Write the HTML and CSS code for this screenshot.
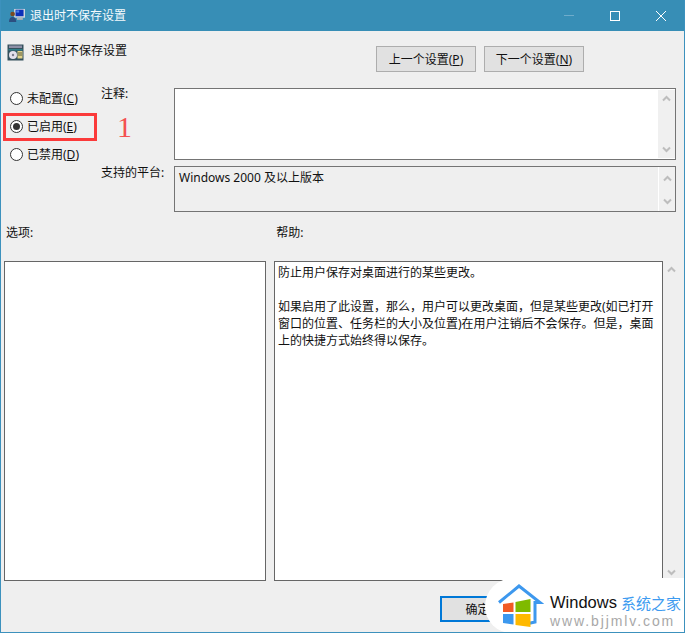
FILE: index.html
```html
<!DOCTYPE html>
<html lang="zh-CN">
<head>
<meta charset="utf-8">
<title>退出时不保存设置</title>
<link rel="stylesheet" href="styles.css">
</head>
<body>
<div class="window">
  <header class="titlebar">
    <svg class="title-icon" width="16" height="15" viewBox="0 0 22 20">
      <rect x="7" y="1" width="15" height="12" fill="#cfd6dc"/>
      <rect x="9" y="2" width="11" height="9" fill="#0b2fb8"/>
      <rect x="10" y="3" width="4" height="3" fill="#4f7fe6"/>
      <rect x="11" y="13" width="8" height="3" fill="#aab2b8"/>
      <circle cx="5" cy="8" r="3.2" fill="#7a4b22"/>
      <path d="M0 19 Q0 12 5 12 Q10 12 10 19 Z" fill="#2c4f80"/>
    </svg>
    <span class="title-text">退出时不保存设置</span>
    <div class="win-controls">
      <span class="win-btn"><svg width="12" height="12" viewBox="0 0 12 12"><path d="M1 5.5H11" stroke="#6eaccb" fill="none"/></svg></span>
      <span class="win-btn"><svg width="12" height="12" viewBox="0 0 12 12"><rect x="1.5" y="1.5" width="9" height="9" stroke="#fff" fill="none"/></svg></span>
      <span class="win-btn"><svg width="12" height="12" viewBox="0 0 12 12"><path d="M1 1L11 11M11 1L1 11" stroke="#fff" fill="none"/></svg></span>
    </div>
  </header>

  <main class="content">
    <div class="head">
      <svg class="head-icon" width="17" height="17" viewBox="0 0 17 17">
        <rect x="0.5" y="0.5" width="16" height="16" fill="#34505c"/>
        <rect x="2" y="1.5" width="13" height="2.5" fill="#8d8fa6"/>
        <rect x="1.5" y="5" width="14" height="1.5" fill="#2f7f88"/>
        <circle cx="6" cy="11" r="4" fill="#e4e0ec"/>
        <circle cx="6" cy="11" r="1.2" fill="#7b7b8c"/>
        <rect x="10.500" y="7" width="5" height="7.5" fill="#e3d48c"/>
        <path d="M11 9H15M11 11H15" stroke="#5a5a3a"/>
      </svg>
      <h1 class="head-title">退出时不保存设置</h1>
      <div class="nav-buttons">
        <button class="btn">上一个设置(<u>P</u>)</button>
        <button class="btn">下一个设置(<u>N</u>)</button>
      </div>
    </div>

    <div class="settings">
      <div class="radios">
        <label class="radio"><input type="radio" name="state">未配置(<u>C</u>)</label>
        <label class="radio"><input type="radio" name="state" checked>已启用(<u>E</u>)</label>
        <label class="radio"><input type="radio" name="state">已禁用(<u>D</u>)</label>
      </div>
      <div class="field-label comment-label">注释:</div>
      <div class="box comment-box">
        <div class="box-body"></div>
        <div class="scrollbar">
          <svg class="chev" width="9" height="7" viewBox="0 0 9 7"><path d="M1 5.5L4.5 2L8 5.5" /></svg>
          <svg class="chev" width="9" height="7" viewBox="0 0 9 7"><path d="M1 1.5L4.5 5L8 1.5" /></svg>
        </div>
      </div>
      <div class="field-label platform-label">支持的平台:</div>
      <div class="box platform-box">
        <div class="box-body platform-text">Windows 2000 及以上版本</div>
        <div class="scrollbar platform-scroll">
          <svg class="chev" width="9" height="7" viewBox="0 0 9 7"><path d="M1 5.5L4.5 2L8 5.5" /></svg>
          <svg class="chev" width="9" height="7" viewBox="0 0 9 7"><path d="M1 1.5L4.5 5L8 1.5" /></svg>
        </div>
      </div>
    </div>

    <div class="section-labels">
      <span class="options-label">选项:</span>
      <span class="help-label">帮助:</span>
    </div>

    <div class="panes">
      <div class="pane options-pane"></div>
      <div class="pane help-pane">防止用户保存对桌面进行的某些更改。<br><br>如果启用了此设置，那么，用户可以更改桌面，但是某些更改(如已打开<br>窗口的位置、任务栏的大小及位置)在用户注销后不会保存。但是，桌面<br>上的快捷方式始终得以保存。</div>
      <div class="scrollbar help-scroll">
        <svg class="chev" width="9" height="7" viewBox="0 0 9 7"><path d="M1 5.5L4.5 2L8 5.5" /></svg>
        <svg class="chev" width="9" height="7" viewBox="0 0 9 7"><path d="M1 1.5L4.5 5L8 1.5" /></svg>
      </div>
    </div>

    <div class="footer">
      <button class="btn ok-btn">确定</button>
    </div>
  </main>

  <div class="annot-rect"></div>
  <div class="annot-num">1</div>

  <div class="watermark">
    <svg class="wm-logo" width="48" height="46" viewBox="0 0 48 46">
      <path d="M3 19.5L23 3L44 19.5H39V39L30 41" fill="none" stroke="#3d98ee" stroke-width="3"/>
      <path d="M7 21L17.500 19.500V29H7Z" fill="#f15a24"/>
      <path d="M19.500 19L34.500 16V29H19.500Z" fill="#7fba00"/>
      <path d="M7 31H17.500V41.500L7 40Z" fill="#3c98ee"/>
      <path d="M19.500 31H34.500V44L19.500 42Z" fill="#ffb900"/>
    </svg>
    <div class="wm-text">
      <div class="wm-line"><span class="wm-name">Windows</span><span class="wm-cn">系统之家</span></div>
      <div class="wm-url">www.bjjmlv.com</div>
    </div>
  </div>
</div>
</body>
</html>
```
FILE: styles.css
```css
* { box-sizing: border-box; }
html, body { margin: 0; padding: 0; background: #fff; }
body {
  width: 686px;
  height: 633px;
  overflow: hidden;
  font-family: "Noto Sans", "Noto Sans CJK SC", sans-serif;
  font-size: 12px;
  color: #111;
}
.window {
  position: relative;
  width: 685px;
  height: 633px;
  background: #efefef;
  border: 1px solid #3c91bd;
  border-top: 0;
  display: flex;
  flex-direction: column;
  overflow: hidden;
}
.titlebar {
  height: 31px;
  flex: none;
  background: #378eb6;
  display: flex;
  align-items: center;
  padding-left: 8px;
  color: #fff;
}
.title-icon { flex: none; margin-right: 5px; }
.title-text { line-height: 31px; color: #f4fafd; }
.win-controls { margin-left: auto; display: flex; padding-right: 0; }
.win-btn {
  width: 46px;
  height: 31px;
  display: flex;
  align-items: center;
  justify-content: center;
}
.content {
  flex: 1;
  padding: 15px 0 0 3px;
  display: flex;
  flex-direction: column;
}
.head {
  display: flex;
  align-items: flex-start;
  height: 26px;
  flex: none;
  padding-left: 3px;
}
.head-icon { margin-top: -2px; flex: none; }
.head-title {
  margin: -4px 0 0 7px;
  font-size: 12px;
  font-weight: 400;
  line-height: 17px;
}
.nav-buttons { margin-left: auto; display: flex; gap: 8px; padding-right: 100px; }
.btn {
  width: 100px;
  height: 26px;
  padding: 0;
  background: #e1e1e1;
  border: 1px solid #adadad;
  font: inherit;
  color: #111;
}
.settings {
  margin-top: 16px;
  display: grid;
  grid-template-columns: 97px 73px 502px;
  grid-template-rows: 72px 46px;
  row-gap: 6px;
  flex: none;
}
.radios {
  grid-row: 1 / 3;
  grid-column: 1;
  padding: 2px 0 0 6px;
  display: flex;
  flex-direction: column;
  gap: 11px;
}
.radio {
  display: flex;
  align-items: center;
  height: 17px;
  line-height: 17px;
  white-space: nowrap;
}
.radio input {
  appearance: none;
  width: 13px;
  height: 13px;
  margin: 0 4px 0 0;
  flex: none;
  background: #fff;
  border: 1px solid #333;
  border-radius: 50%;
  display: grid;
  place-content: center;
}
.radio input:checked::before {
  content: "";
  width: 7px;
  height: 7px;
  border-radius: 50%;
  background: #333;
}
.field-label { line-height: 17px; grid-column: 2; }
.comment-label { grid-row: 1; margin-top: -3px; }
.platform-label { grid-row: 2; margin-top: -2px; }
.box {
  grid-column: 3;
  border: 1px solid #747474;
  display: flex;
  min-height: 0;
}
.comment-box { grid-row: 1; background: #fff; }
.platform-box { grid-row: 2; }
.box-body { flex: 1; }
.platform-text { padding: 2px 4px; line-height: 17px; }
.scrollbar {
  width: 17px;
  flex: none;
  background: #f0f0f0;
  display: flex;
  flex-direction: column;
  justify-content: space-between;
  align-items: center;
}
.comment-box .scrollbar { margin: 1px 0 1px 0; padding: 5px 0 5px; }
.platform-scroll { border-left: 1px solid #fff; padding: 8px 0 6px; }
.chev path { fill: none; stroke: #bdbdbd; stroke-width: 2; }
.section-labels {
  position: relative;
  height: 49px;
  flex: none;
  display: flex;
  padding: 12px 0 0 2px;
  line-height: 17px;
}
.help-label { margin-left: 243px; }
.panes {
  display: flex;
  height: 320px;
  flex: none;
}
.pane {
  background: #fff;
  border: 1px solid #666;
}
.options-pane { width: 262px; margin-right: 8px; }
.help-pane {
  width: 389px;
  padding: 2px 3px;
  line-height: 17px;
  white-space: nowrap;
}
.help-scroll {
  background: transparent;
  padding: 5px 0 5px;
}
.footer {
  margin-top: 15px;
  padding-left: 436px;
  display: flex;
}
.ok-btn {
  width: 75px;
  border: 2px solid #0078d7;
}
.annot-rect {
  position: absolute;
  left: 2px;
  top: 113px;
  width: 94px;
  height: 28px;
  border: 3px solid #fb3a3a;
}
.annot-num {
  position: absolute;
  left: 116px;
  top: 110px;
  font-family: "Liberation Serif", serif;
  font-size: 30px;
  line-height: 34px;
  color: #f45050;
}
.watermark {
  position: absolute;
  left: 484px;
  top: 578px;
  width: 202px;
  height: 55px;
  background: #fff;
  border-radius: 30px 0 0 28px;
  display: flex;
  padding: 5px 0 0 11px;
}
.wm-logo { flex: none; }
.wm-text { margin-left: 6px; }
.wm-line {
  display: flex;
  align-items: center;
  height: 24px;
  margin-top: 7px;
  white-space: nowrap;
}
.wm-name {
  font-family: "Liberation Sans", sans-serif;
  font-size: 16.5px;
  color: #111;
}
.wm-cn {
  margin-left: 4px;
  font-family: "Noto Sans CJK SC", sans-serif;
  font-size: 15px;
  color: #3d9bf0;
}
.wm-url {
  font-family: "Liberation Sans", sans-serif;
  font-size: 14px;
  line-height: 14px;
  letter-spacing: 1.9px;
  color: #a8a8a8;
  white-space: nowrap;
}
```
